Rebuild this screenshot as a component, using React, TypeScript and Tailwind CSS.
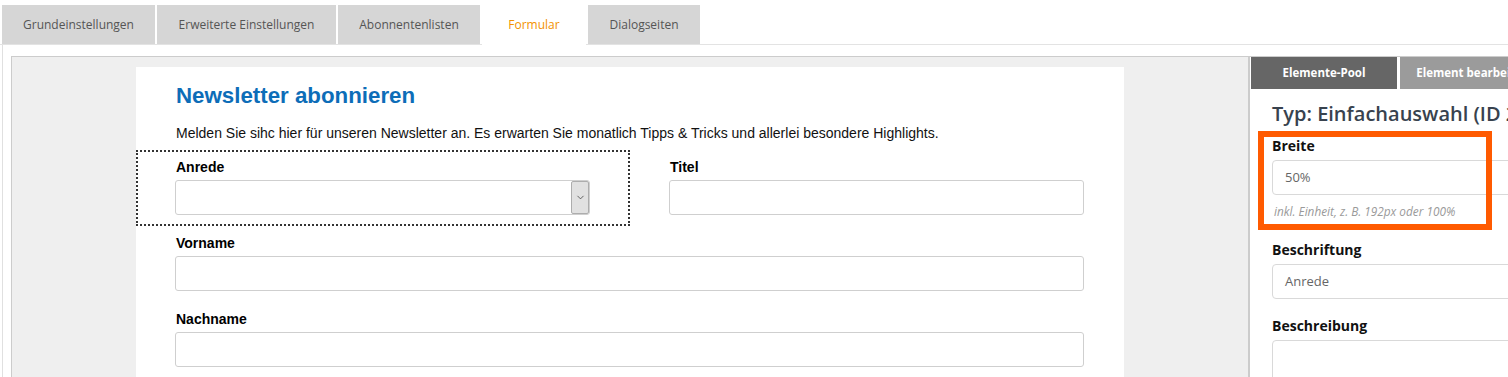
import { ChevronDown } from "lucide-react";

const TABS = [
  { label: "Grundeinstellungen", w: "w-[153px]" },
  { label: "Erweiterte Einstellungen", w: "w-[179px]" },
  { label: "Abonnentenlisten", w: "w-[142px]" },
  { label: "Formular", w: "w-[104px]", active: true },
  { label: "Dialogseiten", w: "w-[112px]" },
];

const FormField = ({
  label,
  half,
  selected,
  select,
}: {
  label: string;
  half?: boolean;
  selected?: boolean;
  select?: boolean;
}) => (
  <div
    className={`pt-2 pr-10 pb-[11px] pl-[39px] ${half ? "w-1/2" : "w-full"} ${
      selected ? "outline-2 outline-dotted outline-[#333] -outline-offset-2" : ""
    }`}
  >
    <div className="mb-1 pl-px text-[14px] font-bold leading-[18px] text-black">{label}</div>
    <div className="relative h-[35px] rounded-[3px] border border-[#cfcfcf] bg-white">
      {select && (
        <div className="absolute top-0 right-0 bottom-0 flex w-[18px] items-center justify-center rounded-[2px] border border-[#adadad] bg-[#e1e1e1]">
          <ChevronDown size={11} strokeWidth={1.75} className="text-[#444]" />
        </div>
      )}
    </div>
  </div>
);

const PanelInput = ({ value }: { value?: string }) => (
  <div className="flex h-[35px] w-[300px] items-center rounded-[4px] border border-[#d9d9d9] bg-white pl-3 text-[13px] text-[#666]">
    {value}
  </div>
);

const App = () => {
  return (
    <div className="h-[377px] w-[1508px] overflow-hidden bg-white font-['Open_Sans',sans-serif]">
      {/* top tabs */}
      <div className="flex gap-[2px] border-b border-[#e3e3e3] pt-[5px] pl-[2px]">
        {TABS.map((t) => (
          <div
            key={t.label}
            className={`flex h-[39px] items-center justify-center text-[12px] ${t.w} ${
              t.active ? "-mb-px h-[40px] bg-white text-[#f39200]" : "bg-[#d6d6d6] text-[#555]"
            }`}
          >
            {t.label}
          </div>
        ))}
      </div>

      <div className="ml-[2px] border-l border-[#e0e0e0] pt-[11px] pl-[8px]">
        <div className="flex h-[400px] border-t border-l border-[#cccccc]">
          {/* form editor */}
          <div className="w-[1236px] shrink-0 bg-[#efefef] pt-[10px] pl-[124px]">
            <div className="h-[340px] w-[988px] bg-white pt-4 font-['Liberation_Sans',Arial,sans-serif]">
              <h1 className="px-10 text-[22.3px] font-bold leading-[26px] text-[#0d6db8]">
                Newsletter abonnieren
              </h1>
              <p className="mt-[14px] px-10 text-[14px] leading-5 text-[#111]">
                Melden Sie sihc hier für unseren Newsletter an. Es erwarten Sie monatlich Tipps &amp; Tricks und
                allerlei besondere Highlights.
              </p>
              <div className="mt-[7px] flex">
                <FormField label="Anrede" half selected select />
                <FormField label="Titel" half />
              </div>
              <FormField label="Vorname" />
              <FormField label="Nachname" />
            </div>
          </div>

          {/* properties panel */}
          <div className="relative w-[330px] shrink-0 border-l-2 border-[#cccccc] bg-white">
            <div className="flex gap-[3px] pl-px">
              <div className="flex h-[32px] w-[146px] items-center justify-center bg-[#666] text-[11.5px] font-bold text-white">
                Elemente-Pool
              </div>
              <div className="flex h-[32px] w-[146px] items-center justify-center bg-[#9b9b9b] text-[11.5px] font-bold whitespace-nowrap text-white">
                Element bearbeiten
              </div>
            </div>

            <div className="pl-[22px]">
              <h2 className="mt-3 text-[20px] font-semibold leading-[26px] whitespace-nowrap text-[#38424e]">
                Typ: Einfachauswahl (ID 2)
              </h2>

              <div className="mt-[10px] text-[14px] font-bold leading-[18px] text-[#111]">Breite</div>
              <div className="mt-[5px]">
                <PanelInput value="50%" />
              </div>
              <div className="mt-2 pl-[2px] text-[11.8px] leading-4 text-[#9a9a9a] italic">
                inkl. Einheit, z. B. 192px oder 100%
              </div>

              <div className="mt-[22px] text-[14px] font-bold leading-[18px] text-[#111]">Beschriftung</div>
              <div className="mt-[5px]">
                <PanelInput value="Anrede" />
              </div>

              <div className="mt-[18px] text-[14px] font-bold leading-[18px] text-[#111]">Beschreibung</div>
              <div className="mt-[5px] h-[60px] w-[300px] rounded-[4px] border border-[#d9d9d9] bg-white" />
            </div>

            {/* highlight annotation */}
            <div className="pointer-events-none absolute top-[74px] left-[8px] h-[99px] w-[234px] border-[6px] border-[#ff5a00]" />
          </div>
        </div>
      </div>
    </div>
  );
};

export default App;
